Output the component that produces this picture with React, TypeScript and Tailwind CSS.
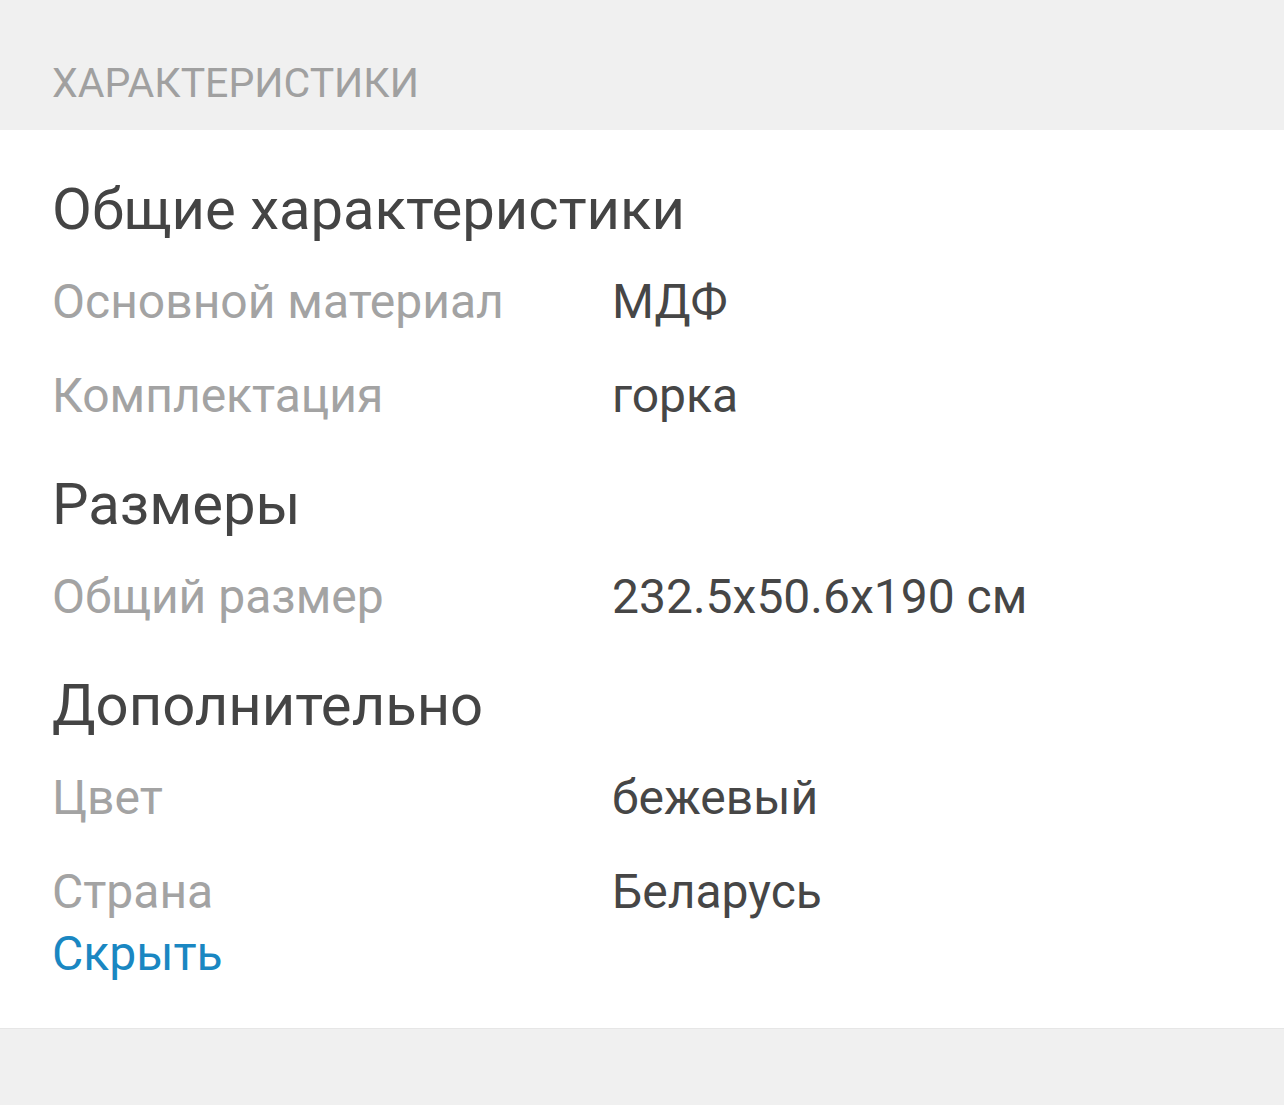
const sections = [
  {
    title: 'Общие характеристики',
    rows: [
      ['Основной материал', 'МДФ'],
      ['Комплектация', 'горка'],
    ],
  },
  {
    title: 'Размеры',
    rows: [['Общий размер', '232.5x50.6x190 см']],
  },
  {
    title: 'Дополнительно',
    rows: [
      ['Цвет', 'бежевый'],
      ['Страна', 'Беларусь'],
    ],
  },
];

export default function App() {
  return (
    <div className="min-h-[1105px] bg-[#f0f0f0] font-['Roboto',sans-serif]">
      <div className="h-[130px] pl-[52px] pt-[58px]">
        <h1 className="text-[41px] leading-[50px] text-[#a0a0a0] uppercase">Характеристики</h1>
      </div>

      <div className="bg-white pl-[52px] pt-[18px] pb-[59px] border-b border-[#e6e6e6]">
        {sections.map((s) => (
          <div key={s.title}>
            <h2 className="mt-[15px] text-[58px] leading-[92px] text-[#444444]">{s.title}</h2>
            {s.rows.map(([label, value]) => (
              <div key={label} className="flex text-[48px] leading-[94px]">
                <span className="w-[560px] shrink-0 text-[#a3a3a3]">{label}</span>
                <span className="text-[#464646]">{value}</span>
              </div>
            ))}
          </div>
        ))}
        <button className="block text-[48px] leading-[30px] text-[#1a87c2]">Скрыть</button>
      </div>
    </div>
  );
}
